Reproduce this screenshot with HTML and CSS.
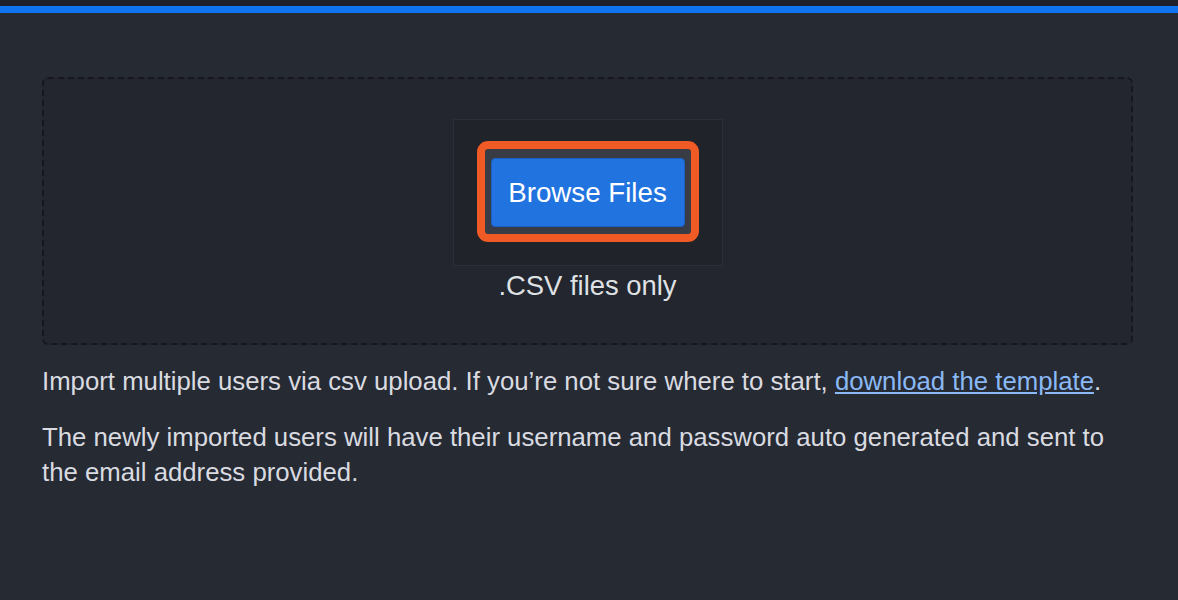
FILE: index.html
```html
<!DOCTYPE html>
<html>
<head>
<meta charset="utf-8">
<link rel="stylesheet" href="styles.css">
</head>
<body>
<div class="topstrip"></div>
<div class="topbar"></div>
<main class="content">
  <section class="dropzone">
    <div class="picker">
      <div class="ring">
        <button class="browse">Browse Files</button>
      </div>
    </div>
    <div class="hint">.CSV files only</div>
  </section>
  <p class="text">Import multiple users via csv upload. If you’re not sure where to start, <a href="#" class="link">download the template</a>.</p>
  <p class="text">The newly imported users will have their username and password auto generated and sent to the email address provided.</p>
</main>
</body>
</html>
```

FILE: styles.css
```css
html, body {
  margin: 0;
  padding: 0;
}
body {
  background: #262a33;
  font-family: "Liberation Sans", Arial, sans-serif;
  color: #d9dbe0;
}
.topstrip {
  height: 6px;
  background: #1e2129;
}
.topbar {
  height: 7px;
  background: #1073f0;
}
.content {
  padding: 64px 45px 0 42px;
}
.dropzone {
  border: 2px dashed #15171c;
  border-radius: 6px;
  background: #23262e;
  height: 268px;
  box-sizing: border-box;
  display: flex;
  flex-direction: column;
  align-items: center;
  padding-top: 40px;
}
.picker {
  background: #20232a;
  border: 1px solid #2b2e36;
  padding: 21px 23px 23px 23px;
}
.ring {
  border: 8px solid #f05a24;
  border-radius: 11px;
  background: #393c45;
  padding: 9px 6px 7px 6px;
  display: flex;
}
.browse {
  width: 194px;
  height: 69px;
  background: #2174e0;
  border: 1px solid #1b5fc6;
  border-radius: 4px;
  color: #ffffff;
  font-family: "Liberation Sans", Arial, sans-serif;
  font-size: 27.7px;
  padding: 0;
  margin: 0;
}
.hint {
  font-size: 27.4px;
  line-height: 32px;
  margin-top: 4px;
  color: #dfe1e5;
}
.text {
  font-size: 25.75px;
  line-height: 35px;
  margin: 19px 0 21px 0;
}
.text + .text {
  margin-top: 21px;
}
.link {
  color: #8ab9f5;
  text-decoration: underline;
}
```
